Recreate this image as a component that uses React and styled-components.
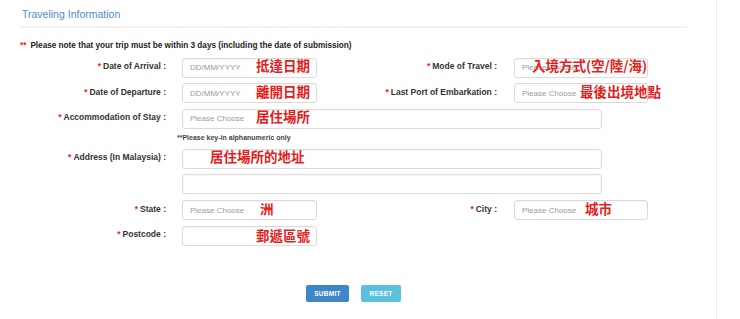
import React from 'react';
import styled, { createGlobalStyle } from 'styled-components';

const GlobalStyle = createGlobalStyle`
  html, body { margin: 0; padding: 0; background: #fff; }
  body { font-family: "Liberation Sans", Arial, sans-serif; }
  * { box-sizing: border-box; }
`;

const Page = styled.div`
  display: flex;
  min-height: 100vh;
`;

const Main = styled.div`
  width: 717px;
  min-height: 100vh;
  padding: 0 29px 0 20px;
  border-right: 1px solid #ededed;
`;

const Header = styled.div`
  padding: 7px 0 5px 2px;
  border-bottom: 2px solid #f3f3f3;
`;

const Title = styled.div`
  font-size: 10.5px;
  line-height: 14px;
  color: #4f8ac9;
`;

const Note = styled.div`
  margin-top: 13px;
  font-size: 8.2px;
  line-height: 10px;
  font-weight: bold;
  color: #222;
`;

const Stars = styled.span`
  color: #e22;
  margin-right: 4px;
`;

const FormGrid = styled.div`
  display: grid;
  grid-template-columns: 162px 135px 197px 134px;
  grid-auto-rows: auto;
  row-gap: 5.6px;
  margin-top: 5px;
  align-items: center;
`;

const Label = styled.div`
  grid-column: ${p => p.col || 1};
  text-align: right;
  padding-right: ${p => (p.col === 3 ? 17 : 16)}px;
  font-size: 8.5px;
  line-height: 10px;
  font-weight: bold;
  color: #333;
  white-space: nowrap;
`;

const Req = styled.span`
  color: #e22;
  margin-right: 2px;
`;

const Field = styled.div`
  position: relative;
  grid-column: ${p => (p.wide ? '2 / 5' : p.col || 2)};
  width: ${p => (p.wide ? '420px' : '100%')};
  height: 20px;
`;

const Input = styled.input`
  width: 100%;
  height: 100%;
  border: 1px solid #dadada;
  border-radius: 3px;
  padding: 0 7px;
  font-family: "Liberation Sans", Arial, sans-serif;
  font-size: 8px;
  color: #555;
  background: #fff;
  box-shadow: inset 0 1px 1px rgba(0, 0, 0, 0.04);
  outline: none;
  &::placeholder { color: #9a9a9a; }
`;

const Mark = styled.span`
  position: absolute;
  left: ${p => p.x}px;
  top: calc(50% + ${p => p.dy || 0}px);
  transform: translateY(-50%);
  font-family: "Noto Sans CJK TC", "Noto Sans CJK SC", sans-serif;
  font-size: 13.5px;
  line-height: 1;
  font-weight: bold;
  color: #e41c1c;
  white-space: nowrap;
  pointer-events: none;
`;

const Hint = styled.div`
  grid-column: 2 / 5;
  margin-left: -5px;
  height: 9px;
  font-size: 7px;
  line-height: 9px;
  font-weight: bold;
  color: #444;
`;

const Actions = styled.div`
  display: flex;
  justify-content: center;
  gap: 12px;
  margin-top: 41px;
`;

const Button = styled.button`
  width: ${p => p.w}px;
  height: 17px;
  border: none;
  border-radius: 2px;
  background: ${p => p.bg};
  color: #fff;
  font-family: "Liberation Sans", Arial, sans-serif;
  font-size: 6.5px;
  font-weight: bold;
  letter-spacing: 0.3px;
  padding: 0;
`;

const Lbl = ({ col, children }) => (
  <Label col={col}>
    <Req>*</Req>{children} :
  </Label>
);

export default function App() {
  return (
    <Page>
      <GlobalStyle />
      <Main>
        <Header>
          <Title>Traveling Information</Title>
        </Header>
        <Note>
          <Stars>**</Stars>Please note that your trip must be within 3 days (including the date of submission)
        </Note>
        <FormGrid>
          <Lbl>Date of Arrival</Lbl>
          <Field>
            <Input placeholder="DD/MM/YYYY" />
            <Mark x={74}>抵達日期</Mark>
          </Field>
          <Lbl col={3}>Mode of Travel</Lbl>
          <Field col={4}>
            <Input placeholder="Please Choose" />
            <Mark x={18}>入境方式(空/陸/海)</Mark>
          </Field>

          <Lbl>Date of Departure</Lbl>
          <Field>
            <Input placeholder="DD/MM/YYYY" />
            <Mark x={74}>離開日期</Mark>
          </Field>
          <Lbl col={3}>Last Port of Embarkation</Lbl>
          <Field col={4}>
            <Input placeholder="Please Choose" />
            <Mark x={66}>最後出境地點</Mark>
          </Field>

          <Lbl>Accommodation of Stay</Lbl>
          <Field wide>
            <Input placeholder="Please Choose" />
            <Mark x={74}>居住場所</Mark>
          </Field>

          <Hint>**Please key-in alphanumeric only</Hint>

          <Lbl>Address (In Malaysia)</Lbl>
          <Field wide>
            <Input />
            <Mark x={28}>居住場所的地址</Mark>
          </Field>

          <Field wide>
            <Input />
          </Field>

          <Lbl>State</Lbl>
          <Field>
            <Input placeholder="Please Choose" />
            <Mark x={78}>洲</Mark>
          </Field>
          <Lbl col={3}>City</Lbl>
          <Field col={4}>
            <Input placeholder="Please Choose" />
            <Mark x={71}>城市</Mark>
          </Field>

          <Lbl>Postcode</Lbl>
          <Field>
            <Input />
            <Mark x={74} dy={2}>郵遞區號</Mark>
          </Field>
        </FormGrid>
        <Actions>
          <Button w={43} bg="#3f86c8">SUBMIT</Button>
          <Button w={40} bg="#5bc0de">RESET</Button>
        </Actions>
      </Main>
    </Page>
  );
}
